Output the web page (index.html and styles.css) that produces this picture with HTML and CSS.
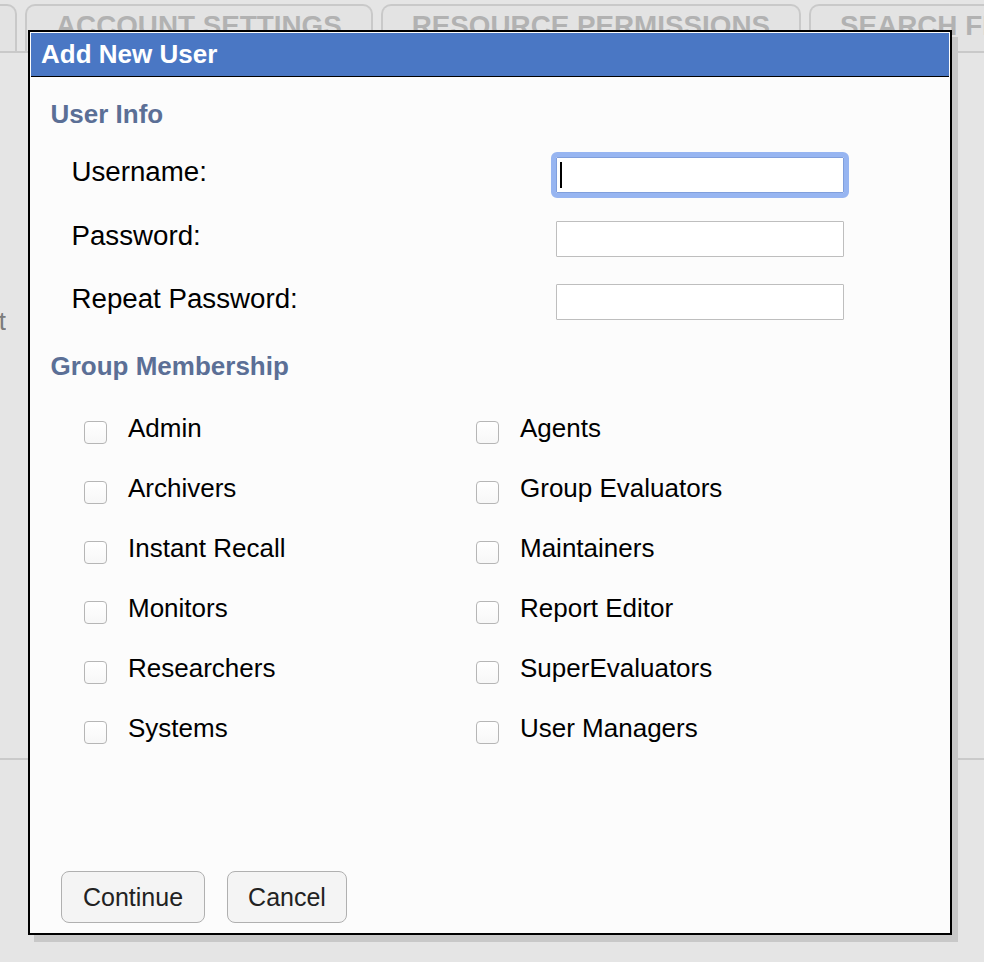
FILE: index.html
```html
<!DOCTYPE html>
<html lang="en">
<head>
<meta charset="utf-8">
<title>Add New User</title>
<link rel="stylesheet" href="styles.css">
</head>
<body>
<div class="page">
  <nav class="tabs">
    <div class="tab tab-first">USERS</div>
    <div class="tab">ACCOUNT SETTINGS</div>
    <div class="tab">RESOURCE PERMISSIONS</div>
    <div class="tab">SEARCH FILTERS</div>
  </nav>
  <div class="content">
    <div class="cut-text"><span>Default</span></div>
    <div class="rule"></div>
  </div>
</div>

<div class="dialog">
  <div class="dialog-title">Add New User</div>
  <div class="dialog-body">
    <h2 class="section">User Info</h2>
    <div class="form-grid">
      <label class="field-label">Username:</label>
      <input class="field focused" type="text">
      <label class="field-label">Password:</label>
      <input class="field" type="password">
      <label class="field-label">Repeat Password:</label>
      <input class="field" type="password">
    </div>
    <h2 class="section section-groups">Group Membership</h2>
    <div class="groups">
      <label class="group"><span class="check"></span><span>Admin</span></label>
      <label class="group"><span class="check"></span><span>Agents</span></label>
      <label class="group"><span class="check"></span><span>Archivers</span></label>
      <label class="group"><span class="check"></span><span>Group Evaluators</span></label>
      <label class="group"><span class="check"></span><span>Instant Recall</span></label>
      <label class="group"><span class="check"></span><span>Maintainers</span></label>
      <label class="group"><span class="check"></span><span>Monitors</span></label>
      <label class="group"><span class="check"></span><span>Report Editor</span></label>
      <label class="group"><span class="check"></span><span>Researchers</span></label>
      <label class="group"><span class="check"></span><span>SuperEvaluators</span></label>
      <label class="group"><span class="check"></span><span>Systems</span></label>
      <label class="group"><span class="check"></span><span>User Managers</span></label>
    </div>
  </div>
  <div class="actions">
    <button class="btn" type="button">Continue</button>
    <button class="btn btn-cancel" type="button">Cancel</button>
  </div>
</div>
</body>
</html>
```

FILE: styles.css
```css
html, body {
  margin: 0;
  padding: 0;
}

body {
  width: 984px;
  height: 962px;
  overflow: hidden;
  background: #e5e5e5;
  font-family: "Liberation Sans", Arial, Helvetica, sans-serif;
  color: #000;
  position: relative;
}

.page {
  width: 984px;
  height: 962px;
  overflow: hidden;
}

.tabs {
  display: flex;
  gap: 8px;
  padding-top: 4px;
  border-bottom: 2px solid #c9c9c9;
  white-space: nowrap;
}

.tab {
  flex: none;
  box-sizing: border-box;
  height: 47px;
  padding: 5px 29px 0;
  border: 2px solid #c9c9c9;
  border-bottom: none;
  border-radius: 10px 10px 0 0;
  background: #e3e3e3;
  color: #b2b2b2;
  font-size: 27.8px;
  font-weight: bold;
  line-height: 30px;
}

.tab-first {
  width: 120px;
  margin-left: -103px;
  overflow: hidden;
  color: transparent;
}

.content {
  padding-top: 253px;
}

.cut-text {
  width: 6px;
  overflow: hidden;
  display: flex;
  justify-content: flex-end;
  white-space: nowrap;
  font-size: 26px;
  line-height: 30px;
  color: #7c7c7c;
}

.rule {
  margin-top: 422px;
  height: 2px;
  background: #cacaca;
}

/* Dialog overlay */
.dialog {
  position: absolute;
  left: 28px;
  top: 30px;
  width: 924px;
  height: 905px;
  box-sizing: border-box;
  border: 2px solid #000;
  background: #fcfcfc;
  box-shadow: 6px 7px 0 #c8c8c8;
  display: flex;
  flex-direction: column;
}

.dialog-title {
  margin: 1px 1px 0;
  box-sizing: content-box;
  height: 37.5px;
  padding: 5.5px 0 0 10px;
  background: #4a77c4;
  border-bottom: 1px solid #000;
  color: #fff;
  font-size: 26px;
  font-weight: bold;
  line-height: 30px;
}

.dialog-body {
  padding: 21.5px 0 0 20.5px;
}

.section {
  margin: 0;
  font-size: 26px;
  font-weight: bold;
  line-height: 30px;
  color: #5b6f96;
}

.section-groups {
  margin-top: 30.5px;
}

.form-grid {
  margin: 28.5px 0 0 21px;
  display: grid;
  grid-template-columns: 484.5px 288px;
  grid-auto-rows: 36px;
  row-gap: 27.5px;
  align-items: start;
}

.field-label {
  font-size: 27.7px;
  line-height: 30px;
  color: #000;
}

.field {
  width: 288px;
  height: 36px;
  box-sizing: border-box;
  margin: 0;
  padding: 0;
  border: 1px solid #bebebe;
  border-radius: 1px;
  background: #fff;
  font: inherit;
}

.field.focused {
  border-color: #809fdc;
  outline: 5px solid #97b5f1;
  outline-offset: 0;
  background: #fff linear-gradient(#000, #000) 3px 4px / 2px 26px no-repeat;
}

.groups {
  margin: 32px 0 0 33.5px;
  display: grid;
  grid-template-columns: 392px 392px;
  grid-auto-rows: 30px;
  row-gap: 30px;
}

.group {
  display: flex;
  align-items: flex-start;
  font-size: 26px;
  line-height: 30px;
  color: #000;
}

.check {
  flex: none;
  width: 23px;
  height: 23px;
  box-sizing: border-box;
  margin: 8px 21px 0 0;
  border: 1px solid #b6b6b6;
  border-radius: 4px;
  background: linear-gradient(#ffffff, #f7f7f7);
}

.actions {
  margin-top: auto;
  padding: 0 0 10px 31px;
  display: flex;
  gap: 22px;
}

.btn {
  height: 52px;
  margin: 0;
  padding: 0 21px;
  border: 1px solid #b0b0b0;
  border-radius: 8px;
  background: #f4f4f4;
  color: #222;
  font-family: "Liberation Sans", Arial, Helvetica, sans-serif;
  font-size: 25px;
  line-height: 30px;
}

.btn-cancel {
  padding: 0 20px;
}
```
